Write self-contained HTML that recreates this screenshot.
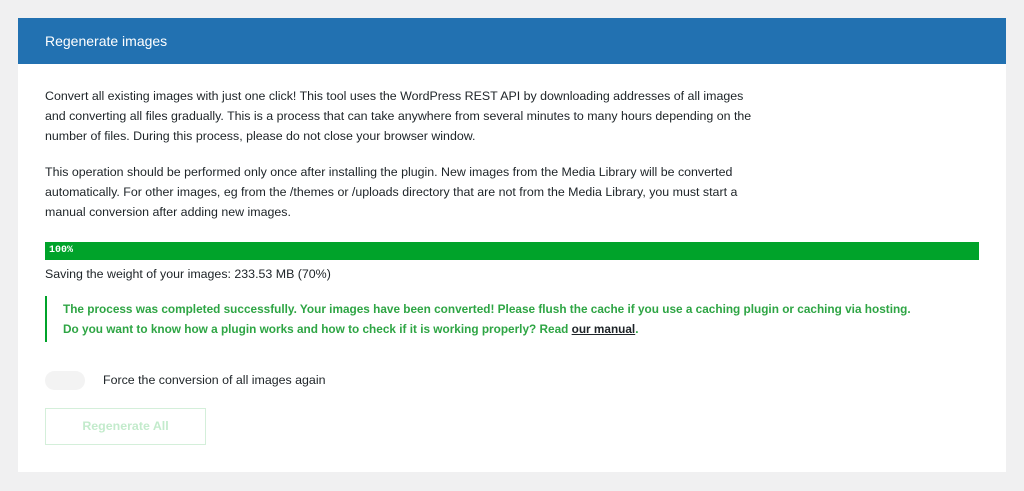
<!DOCTYPE html>
<html><head><style>
body{margin:0;background:#f0f0f1;width:1024px;height:491px;overflow:hidden;font-family:"Liberation Sans",sans-serif;font-size:12.4px;color:#1d2327}
.card{position:absolute;left:18px;top:18px;width:988px;height:454px;background:#fff}
.hd{height:46px;background:#2271b1;color:#fff;font-size:14px;line-height:46px;padding-left:27px}
.p{position:absolute;left:27px;line-height:20px;white-space:nowrap}
.bar{position:absolute;left:27px;top:224px;width:934px;height:18px;background:#00a32a;color:#fff;font-family:"Liberation Mono",monospace;font-size:10px;font-weight:bold;line-height:18px;padding-left:4px;box-sizing:border-box}
.note{position:absolute;left:27px;top:278px;height:46px;border-left:2px solid #00a32a;padding-left:16px;color:#2ea544;font-weight:bold;font-size:11.8px;line-height:20px;white-space:nowrap;padding-top:3px;box-sizing:border-box}
.note a{color:#1d2327;text-decoration:underline}
.tg{position:absolute;left:27px;top:353px;width:40px;height:19px;border-radius:10px;background:#f3f3f3}
.btn{position:absolute;left:27px;top:390px;width:161px;height:37px;border:1px solid #d4efda;box-sizing:border-box;color:#c3ebcc;font-weight:bold;text-align:center;line-height:35px}
</style></head><body>
<div class="card">
<div class="hd">Regenerate images</div>
<div class="p" style="top:68px">Convert all existing images with just one click! This tool uses the WordPress REST API by downloading addresses of all images<br>and converting all files gradually. This is a process that can take anywhere from several minutes to many hours depending on the<br>number of files. During this process, please do not close your browser window.</div>
<div class="p" style="top:144px">This operation should be performed only once after installing the plugin. New images from the Media Library will be converted<br>automatically. For other images, eg from the /themes or /uploads directory that are not from the Media Library, you must start a<br>manual conversion after adding new images.</div>
<div class="bar">100%</div>
<div class="p" style="top:246px">Saving the weight of your images: 233.53 MB (70%)</div>
<div class="note">The process was completed successfully. Your images have been converted! Please flush the cache if you use a caching plugin or caching via hosting.<br>Do you want to know how a plugin works and how to check if it is working properly? Read <a>our manual</a>.</div>
<div class="tg"></div>
<div class="p" style="top:352px;left:85px">Force the conversion of all images again</div>
<div class="btn">Regenerate All</div>
</div>
</body></html>
